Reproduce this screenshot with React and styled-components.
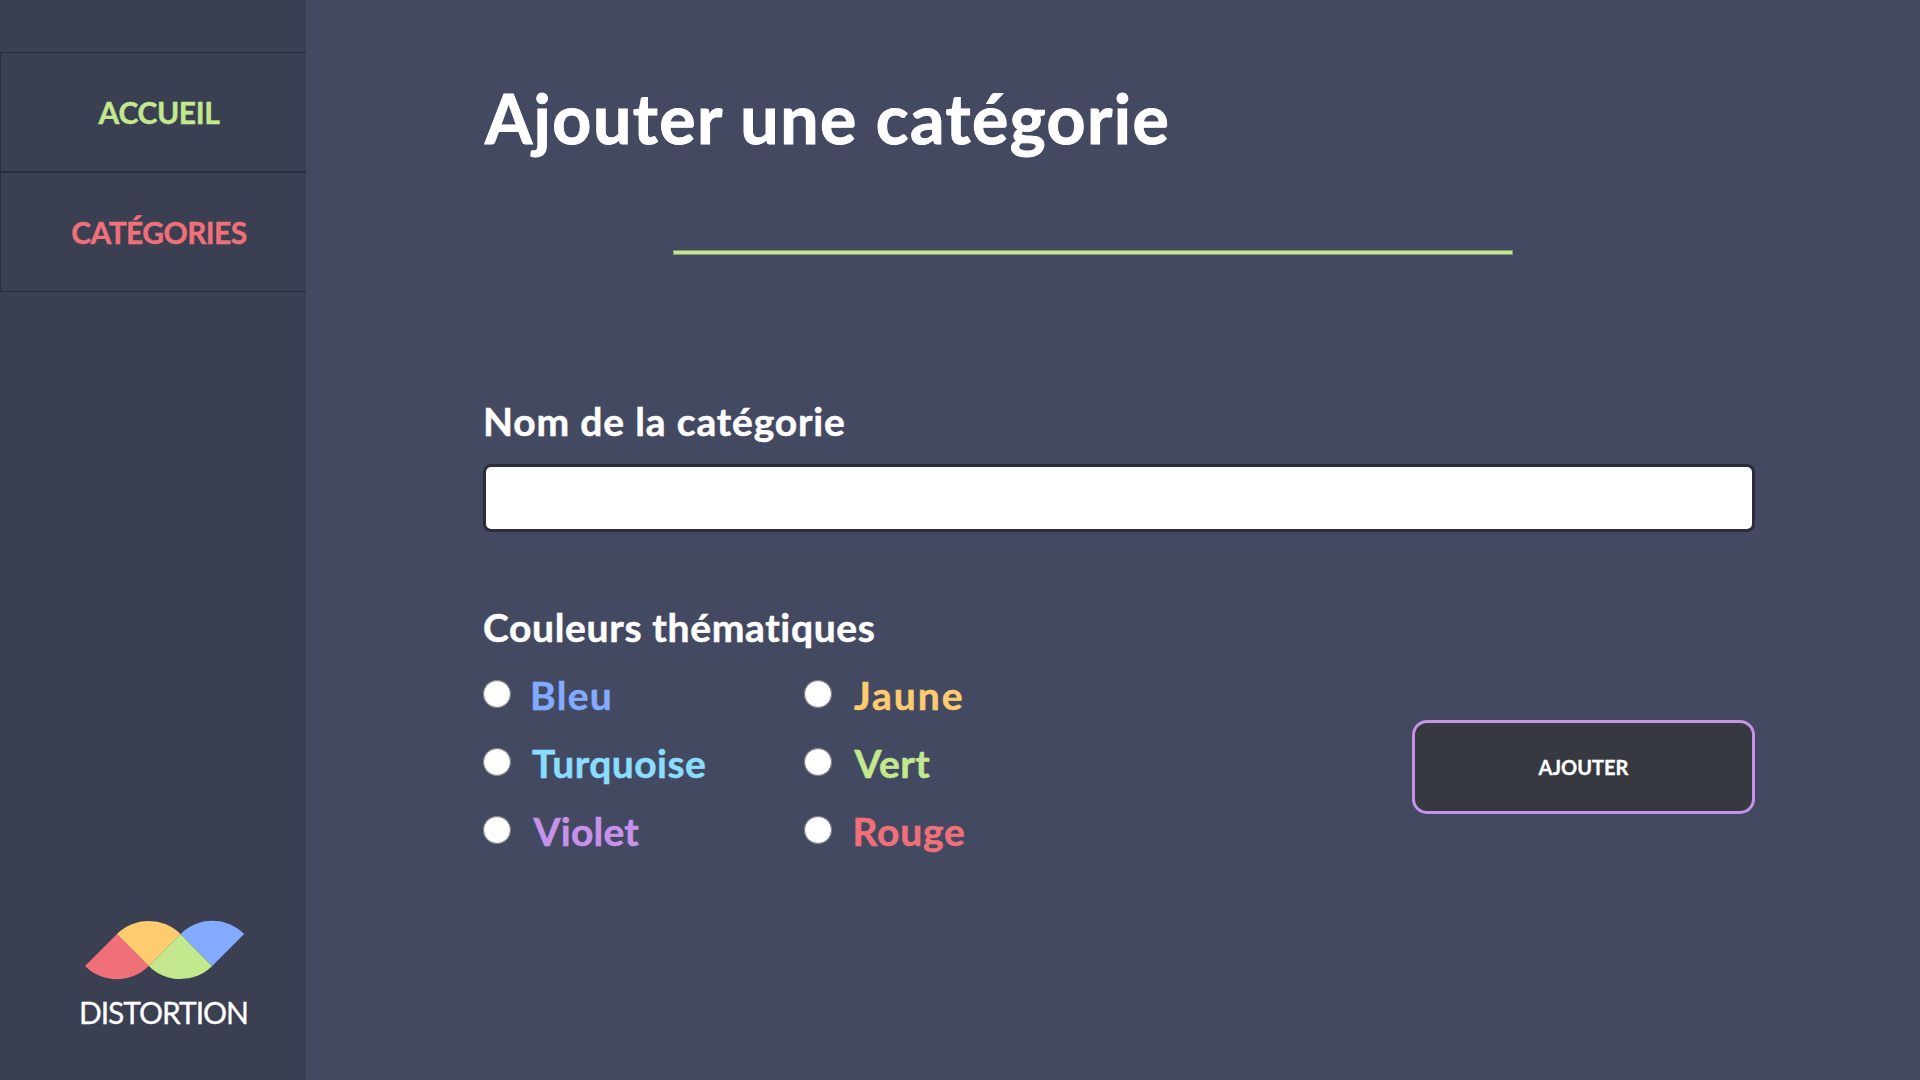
import React, { useState } from "react";
import styled, { createGlobalStyle } from "styled-components";

const colors = {
  page: "#444962",
  sidebar: "#3b3f52",
  line: "#2b2d3c",
  button: "#363a40",
  blue: "#82aaff",
  turquoise: "#89ddff",
  violet: "#c792ea",
  yellow: "#ffcb6f",
  green: "#c3e88d",
  red: "#ef7079",
};

const GlobalStyle = createGlobalStyle`
  *, *::before, *::after { box-sizing: border-box; }
  body {
    margin: 0;
    background: ${colors.page};
    color: #fff;
    font-family: Lato, "Open Sans", sans-serif;
  }
`;

const Layout = styled.div`
  display: flex;
  height: 100vh;
  overflow: hidden;
`;

const Sidebar = styled.aside`
  display: flex;
  flex-direction: column;
  justify-content: space-between;
  flex: none;
  width: 306px;
  padding: 52px 0 50px;
  background: ${colors.sidebar};
`;

const Nav = styled.nav`
  display: flex;
  flex-direction: column;
`;

const NavLink = styled.a`
  display: flex;
  align-items: center;
  justify-content: center;
  height: 120px;
  padding-left: 11px;
  border: 1px solid ${colors.line};
  border-right: 0;
  color: ${(p) => p.$color};
  font-size: 30px;
  font-weight: 700;
  letter-spacing: ${(p) => p.$tracking}px;
  line-height: 36px;
  text-decoration: none;
  text-transform: uppercase;
  -webkit-text-stroke: 0.4px currentColor;
`;

const Brand = styled.div`
  display: flex;
  flex-direction: column;
  gap: 14px;
  padding-left: 79px;
`;

const BrandMark = styled.svg`
  display: block;
  width: 160px;
  height: 60px;
  margin-left: 6px;
`;

const BrandName = styled.span`
  font-size: 30px;
  font-weight: 400;
  letter-spacing: -1.05px;
  line-height: 36px;
  -webkit-text-stroke: 0.3px currentColor;
`;

const Main = styled.main`
  flex: 1;
  padding: 76px 165px 0 177px;
`;

const Title = styled.h1`
  margin: 0;
  padding-left: 2px;
  font-size: 68px;
  font-weight: 700;
  letter-spacing: 1.46px;
  line-height: 84px;
  -webkit-text-stroke: 1px currentColor;
`;

const Divider = styled.hr`
  width: 840px;
  height: 5px;
  margin: 90px 0 0 190px;
  border: 1px solid #87996f;
  background: ${colors.green};
`;

const Form = styled.form`
  display: flex;
  flex-direction: column;
  gap: 71px;
  margin-top: 142px;
`;

const Field = styled.label`
  display: flex;
  flex-direction: column;
  gap: 19px;
`;

const Heading = styled.span`
  display: block;
  font-size: 39px;
  font-weight: 700;
  letter-spacing: ${(p) => p.$tracking}px;
  line-height: 48px;
  -webkit-text-stroke: 0.5px currentColor;
`;

const TextInput = styled.input`
  width: 100%;
  height: 68px;
  padding: 0 16px;
  border: 3px solid ${colors.line};
  border-radius: 8px;
  background: #fff;
  font: 400 30px Lato, sans-serif;
  outline: none;
`;

const Bottom = styled.div`
  display: flex;
  align-items: flex-end;
  justify-content: space-between;
`;

const OptionGrid = styled.div`
  display: grid;
  grid-template: repeat(3, 68px) / 321px auto;
  grid-auto-flow: column;
  margin-top: 10px;
`;

const Option = styled.label`
  display: flex;
  align-items: center;
  color: ${(p) => p.$color};
  font-size: 39px;
  font-weight: 700;
  letter-spacing: ${(p) => p.$tracking}px;
  line-height: 48px;
  -webkit-text-stroke: 0.5px currentColor;
`;

const Radio = styled.input`
  width: 28px;
  height: 28px;
  margin: 0 ${(p) => p.$gap}px 2px 0;
`;

const SubmitButton = styled.button`
  width: 343px;
  height: 94px;
  margin-bottom: 51px;
  border: 3px solid ${colors.violet};
  border-radius: 15px;
  background: ${colors.button};
  color: #fff;
  font: 700 20px/24px Lato, sans-serif;
  text-transform: uppercase;
  -webkit-text-stroke: 0.3px currentColor;
`;

const links = [
  { label: "Accueil", color: colors.green, tracking: -0.38 },
  { label: "Catégories", color: colors.red, tracking: -0.6 },
];

const options = [
  { label: "Bleu", color: colors.blue, tracking: 1.3, gap: 19 },
  { label: "Turquoise", color: colors.turquoise, tracking: 0.45, gap: 21 },
  { label: "Violet", color: colors.violet, tracking: 0.2, gap: 22.5 },
  { label: "Jaune", color: colors.yellow, tracking: 2, gap: 22 },
  { label: "Vert", color: colors.green, tracking: 0.5, gap: 22.5 },
  { label: "Rouge", color: colors.red, tracking: 0.8, gap: 20.5 },
];

function Logo() {
  return (
    <Brand>
      <BrandMark viewBox="0 0 160 60" aria-hidden="true">
        <path d="M32 14 L63.7 46 A45 45 0 0 1 0 46 Z" fill={colors.red} />
        <path d="M32 14 A45 45 0 0 1 95.5 14 L63.7 46 Z" fill={colors.yellow} />
        <path d="M95.5 14 L127.2 46 A45 45 0 0 1 63.7 46 Z" fill={colors.green} />
        <path d="M95.5 14 A45 45 0 0 1 159.2 14 L127.2 46 Z" fill={colors.blue} />
      </BrandMark>
      <BrandName>DISTORTION</BrandName>
    </Brand>
  );
}

export default function App() {
  const [name, setName] = useState("");

  return (
    <Layout>
      <GlobalStyle />
      <Sidebar>
        <Nav>
          {links.map((link) => (
            <NavLink key={link.label} href="#" $color={link.color} $tracking={link.tracking}>
              {link.label}
            </NavLink>
          ))}
        </Nav>
        <Logo />
      </Sidebar>
      <Main>
        <Title>Ajouter une catégorie</Title>
        <Divider />
        <Form onSubmit={(e) => e.preventDefault()}>
          <Field>
            <Heading $tracking={0.84}>Nom de la catégorie</Heading>
            <TextInput type="text" value={name} onChange={(e) => setName(e.target.value)} />
          </Field>
          <Bottom>
            <div>
              <Heading $tracking={0.66}>Couleurs thématiques</Heading>
              <OptionGrid>
                {options.map((o) => (
                  <Option key={o.label} $color={o.color} $tracking={o.tracking}>
                    <Radio type="radio" name="couleur" value={o.label} $gap={o.gap} />
                    {o.label}
                  </Option>
                ))}
              </OptionGrid>
            </div>
            <SubmitButton type="submit">Ajouter</SubmitButton>
          </Bottom>
        </Form>
      </Main>
    </Layout>
  );
}
